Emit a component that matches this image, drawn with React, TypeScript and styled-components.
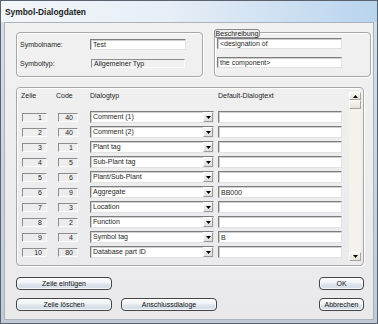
import React from "react";
import styled, { createGlobalStyle } from "styled-components";

const Global = createGlobalStyle`
  html, body { margin: 0; padding: 0; background: #ffffff; }
  body { font-family: "Liberation Sans", Arial, sans-serif; font-size: 7px; color: #262626; }
  * { box-sizing: border-box; }
`;

const Window = styled.div`
  width: 378px;
  height: 324px;
  border: 1px solid #59626d;
  background: linear-gradient(180deg, #d6dee8, #c0cad7);
  display: flex;
  flex-direction: column;
`;

const TitleBar = styled.div`
  height: 21px;
  flex: none;
  display: flex;
  align-items: center;
  padding-left: 4px;
  font-size: 8.4px;
  font-weight: bold;
  color: #1b1b1b;
  background: linear-gradient(90deg, #f3f6f9 0%, #e6eef6 45%, #b9d4ee 100%);
`;

const Client = styled.div`
  flex: 1;
  margin: 0 3px 3px 3px;
  border: 1px solid #a9b2bd;
  background: linear-gradient(180deg, #f1f1f1, #e9e9ec);
  padding: 9px 2px 0 11px;
  display: flex;
  flex-direction: column;
`;

const TopRow = styled.div`
  display: flex;
  gap: 11px;
`;

const GroupBox = styled.div<{ $w: number; $h: number }>`
  position: relative;
  width: ${(p) => p.$w}px;
  height: ${(p) => p.$h}px;
  border: 1px solid #a7a7a7;
  border-radius: 4px;
  box-shadow: inset 1px 1px 0 #ffffff, 1px 1px 0 #ffffff;
`;

const NameGrid = styled.div`
  display: grid;
  grid-template-columns: 70px 96px;
  grid-template-rows: 11px 9px;
  row-gap: 9px;
  align-items: center;
  padding: 6px 0 0 3px;
`;

const Label = styled.span`
  white-space: nowrap;
`;

const Field = styled.div<{ $w: number; $h?: number }>`
  width: ${(p) => p.$w}px;
  height: ${(p) => p.$h ?? 11}px;
  background: #ffffff;
  border: 1px solid;
  border-color: #7d7d7d #e2e2e2 #e2e2e2 #7d7d7d;
  box-shadow: inset 1px 1px 0 #cfcfcf;
  padding-left: 2px;
  display: flex;
  align-items: center;
  white-space: nowrap;
  line-height: 9px;
`;

const StaticField = styled.div`
  width: 94px;
  height: 9px;
  margin-left: 1px;
  border-top: 1px solid #8d8d8d;
  border-left: 1px solid #8d8d8d;
  border-bottom: 1px solid #fbfbfb;
  border-right: 1px solid #fbfbfb;
  padding-left: 2px;
  display: flex;
  align-items: center;
  white-space: nowrap;
  line-height: 8px;
`;

const DescStack = styled.div`
  display: flex;
  flex-direction: column;
  gap: 8px;
  padding: 5px 0 0 2px;
`;

const Legend = styled.div`
  position: absolute;
  left: -1px;
  top: -4px;
  width: 46px;
  height: 9px;
  border: 1px solid #8a8a8a;
  border-radius: 3px;
  background: #eeeeee;
  display: flex;
  align-items: center;
  justify-content: center;
  line-height: 7px;
`;

const MainGroup = styled(GroupBox)`
  margin-top: 10px;
  display: grid;
  grid-template-columns: 321px 12px;
  column-gap: 7px;
  padding: 3px 2px 0 4px;
  align-items: start;
`;

const TableArea = styled.div`
  display: flex;
  flex-direction: column;
`;

const HeaderRow = styled.div`
  height: 8px;
  display: grid;
  grid-template-columns: 35px 34px 128px 1fr;
  align-items: center;
`;

const Rows = styled.div`
  margin-top: 12px;
  display: flex;
  flex-direction: column;
  gap: 3px;
`;

const Row = styled.div`
  height: 12px;
  padding-left: 1px;
  display: grid;
  grid-template-columns: 36px 32px 128px 124px;
  align-items: center;
`;

const NumBox = styled.div<{ $w: number; $pr: number }>`
  width: ${(p) => p.$w}px;
  height: 9px;
  border-top: 1px solid #8d8d8d;
  border-left: 1px solid #8d8d8d;
  border-bottom: 1px solid #fcfcfc;
  border-right: 1px solid #fcfcfc;
  text-align: right;
  padding-right: ${(p) => p.$pr}px;
  line-height: 7px;
`;

const Combo = styled.div`
  width: 124px;
  height: 12px;
  background: #ffffff;
  border: 1px solid;
  border-color: #7d7d7d #e2e2e2 #e2e2e2 #7d7d7d;
  box-shadow: inset 1px 1px 0 #cfcfcf;
  display: flex;
  align-items: center;
`;

const ComboText = styled.span`
  flex: 1;
  padding-left: 2px;
  white-space: nowrap;
  line-height: 10px;
`;

const DropButton = styled.div`
  width: 10px;
  height: 10px;
  background: linear-gradient(180deg, #f7f7f7, #dedede);
  border: 1px solid;
  border-color: #ffffff #9a9a9a #9a9a9a #ffffff;
  display: flex;
  align-items: center;
  justify-content: center;
`;

const ScrollBar = styled.div`
  margin-top: 1px;
  height: 169px;
  background: #f4f2ea;
  display: flex;
  flex-direction: column;
`;

const ScrollBtn = styled.div<{ $h: number }>`
  height: ${(p) => p.$h}px;
  background: linear-gradient(180deg, #f6f5f0, #e6e3d8);
  border: 1px solid;
  border-color: #ffffff #a8a69c #a8a69c #ffffff;
  display: flex;
  align-items: center;
  justify-content: center;
`;

const ScrollSpacer = styled.div`
  flex: 1;
`;

const ButtonGrid = styled.div`
  margin-top: 11px;
  margin-right: 7px;
  display: grid;
  grid-template-columns: 96px 96px 1fr 45px;
  grid-template-rows: 13px 13px;
  column-gap: 9px;
  row-gap: 8px;
`;

const Button = styled.div<{ $col: number; $row: number }>`
  grid-column: ${(p) => p.$col};
  grid-row: ${(p) => p.$row};
  border: 1px solid #444444;
  border-radius: 4px;
  background: linear-gradient(180deg, #fdfdfd 0%, #eff2f6 45%, #dde4ed 55%, #d3dbe6 100%);
  box-shadow: inset 0 0 0 1px rgba(255, 255, 255, 0.75);
  display: flex;
  align-items: center;
  justify-content: center;
  color: #111111;
  white-space: nowrap;
`;

const Arrow = ({ up }: { up?: boolean }) => (
  <svg width="5" height="3" viewBox="0 0 5 3">
    <polygon points={up ? "0,3 5,3 2.5,0" : "0,0 5,0 2.5,3"} fill="#000" />
  </svg>
);

const rows: [number, number, string, string][] = [
  [1, 40, "Comment (1)", ""],
  [2, 40, "Comment (2)", ""],
  [3, 1, "Plant tag", ""],
  [4, 5, "Sub-Plant tag", ""],
  [5, 6, "Plant/Sub-Plant", ""],
  [6, 9, "Aggregate", "BB000"],
  [7, 3, "Location", ""],
  [8, 2, "Function", ""],
  [9, 4, "Symbol tag", "B"],
  [10, 80, "Database part ID", ""],
];

export default function App() {
  return (
    <>
      <Global />
      <Window>
        <TitleBar>Symbol-Dialogdaten</TitleBar>
        <Client>
          <TopRow>
            <GroupBox $w={187} $h={45}>
              <NameGrid>
                <Label>Symbolname:</Label>
                <Field $w={96}>Test</Field>
                <Label>Symboltyp:</Label>
                <StaticField>Allgemeiner Typ</StaticField>
              </NameGrid>
            </GroupBox>
            <GroupBox $w={157} $h={45}>
              <Legend>Beschreibung</Legend>
              <DescStack>
                <Field $w={125}>&lt;designation of</Field>
                <Field $w={125}>the component&gt;</Field>
              </DescStack>
            </GroupBox>
          </TopRow>
          <MainGroup $w={348} $h={179}>
            <TableArea>
              <HeaderRow>
                <span>Zeile</span>
                <span>Code</span>
                <span>Dialogtyp</span>
                <span>Default-Dialogtext</span>
              </HeaderRow>
              <Rows>
                {rows.map(([z, c, t, d]) => (
                  <Row key={z}>
                    <NumBox $w={25} $pr={4}>{z}</NumBox>
                    <NumBox $w={20} $pr={4}>{c}</NumBox>
                    <Combo>
                      <ComboText>{t}</ComboText>
                      <DropButton>
                        <Arrow />
                      </DropButton>
                    </Combo>
                    <Field $w={124} $h={12}>{d}</Field>
                  </Row>
                ))}
              </Rows>
            </TableArea>
            <ScrollBar>
              <ScrollBtn $h={8}>
                <Arrow up />
              </ScrollBtn>
              <ScrollBtn $h={9} />
              <ScrollSpacer />
              <ScrollBtn $h={9}>
                <Arrow />
              </ScrollBtn>
            </ScrollBar>
          </MainGroup>
          <ButtonGrid>
            <Button $col={1} $row={1}>Zeile einfügen</Button>
            <Button $col={4} $row={1}>OK</Button>
            <Button $col={1} $row={2}>Zeile löschen</Button>
            <Button $col={2} $row={2}>Anschlussdialoge</Button>
            <Button $col={4} $row={2}>Abbrechen</Button>
          </ButtonGrid>
        </Client>
      </Window>
    </>
  );
}
